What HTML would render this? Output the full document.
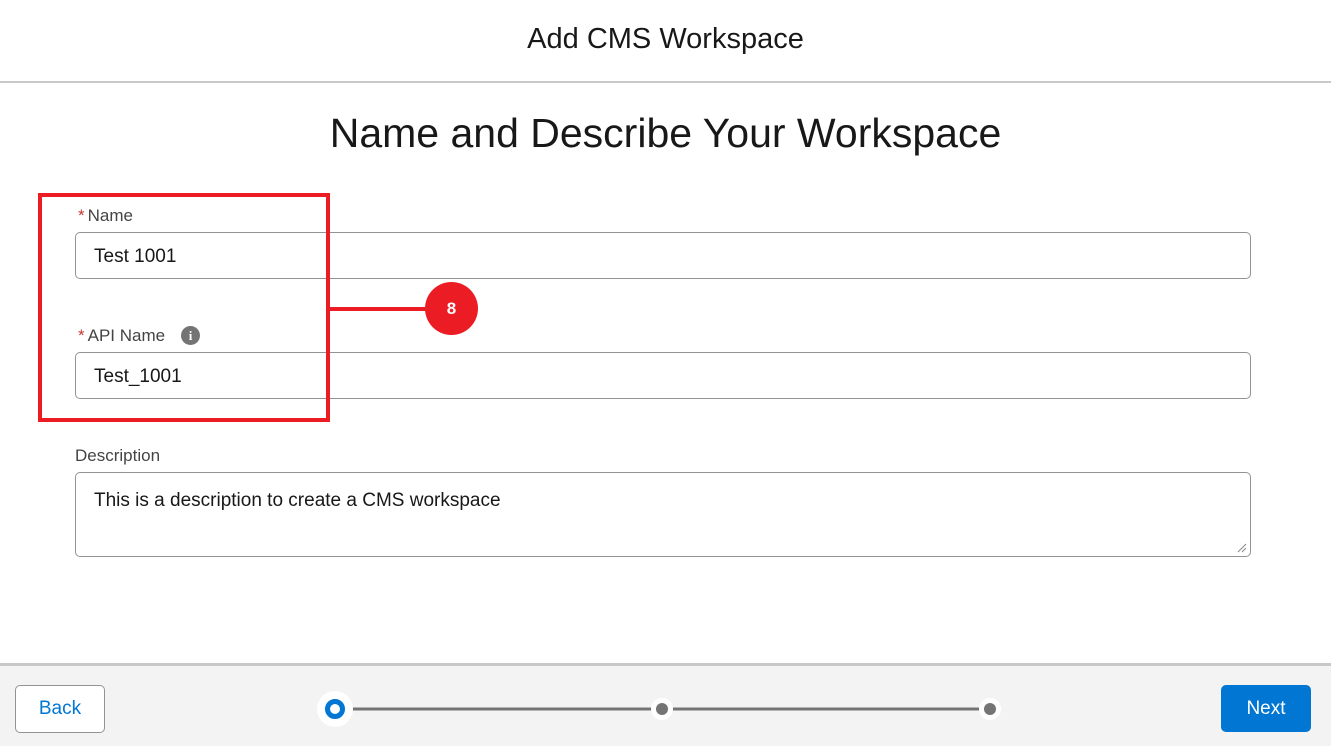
<!DOCTYPE html>
<html><head><style>
body{margin:0;width:1331px;height:743px;background:#fff;font-family:"Liberation Sans",sans-serif;position:relative;overflow:hidden;color:#181818}
.a{position:absolute}
.hdr{left:0;top:0;width:1331px;height:81px;border-bottom:2px solid #c9c9c9;text-align:center;line-height:78px;font-size:29px}
.h1{left:0;width:1331px;top:110px;text-align:center;font-size:41px}
.lbl{font-size:17px;color:#444}
.lbl b{color:#c23934;font-weight:normal;margin-right:3px}
.inp{left:75px;border:1px solid #939393;border-radius:5px;font-size:19px;line-height:47px;padding-left:18px;box-sizing:border-box;width:1176px;height:47px}
.foot{left:0;top:663px;width:1331px;height:80px;background:#f3f3f3;border-top:3px solid #c9c9c9}
</style></head><body>
<div class="a hdr">Add CMS Workspace</div>
<div class="a h1">Name and Describe Your Workspace</div>
<div class="a lbl" style="left:78px;top:206px"><b>*</b>Name</div>
<div class="a inp" style="top:232px">Test 1001</div>
<div class="a lbl" style="left:78px;top:326px"><b>*</b>API Name</div>
<div class="a" style="left:181px;top:326px;width:19px;height:19px;border-radius:50%;background:#747474;color:#fff;font-size:13px;font-weight:bold;text-align:center;line-height:19px;font-family:'Liberation Serif',serif">i</div>
<div class="a inp" style="top:352px">Test_1001</div>
<div class="a lbl" style="left:75px;top:446px">Description</div>
<div class="a inp" style="top:472px;height:85px;line-height:normal;padding-top:17px">This is a description to create a CMS workspace</div>
<svg class="a" style="left:1236px;top:542px" width="12" height="12"><path d="M2 10L10 2M6 10L10 6" stroke="#888" stroke-width="1"/></svg>
<div class="a" style="left:38px;top:193px;width:284px;height:221px;border:4px solid #ec1c24"></div>
<div class="a" style="left:326px;top:307px;width:104px;height:4px;background:#ec1c24"></div>
<div class="a" style="left:425px;top:282px;width:53px;height:53px;border-radius:50%;background:#ec1c24;color:#fff;font-weight:bold;font-size:17px;text-align:center;line-height:53px">8</div>
<div class="a foot"></div>
<div class="a" style="left:15px;top:685px;width:88px;height:46px;border:1px solid #939393;border-radius:5px;background:#fff;color:#0176d3;font-size:19px;text-align:center;line-height:46px">Back</div>
<div class="a" style="left:1221px;top:685px;width:90px;height:47px;border-radius:5px;background:#0176d3;color:#fff;font-size:19px;text-align:center;line-height:47px">Next</div>
<svg class="a" style="left:0;top:680px" width="1331" height="60">
<line x1="345" y1="29" x2="985" y2="29" stroke="#747474" stroke-width="3"/>
<circle cx="335" cy="29" r="18" fill="#fff"/><circle cx="335" cy="29" r="7.5" fill="none" stroke="#0176d3" stroke-width="5"/>
<circle cx="662" cy="29" r="11" fill="#fff"/><circle cx="662" cy="29" r="6" fill="#747474"/>
<circle cx="990" cy="29" r="11" fill="#fff"/><circle cx="990" cy="29" r="6" fill="#747474"/>
</svg>
</body></html>
